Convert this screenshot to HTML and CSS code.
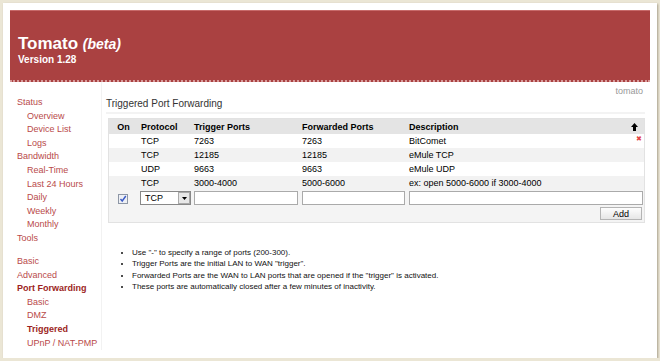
FILE: index.html
```html
<!DOCTYPE html>
<html lang="en">
<head>
    <meta charset="UTF-8">
    <title>[tomato] Triggered Port Forwarding</title>
    <link rel="stylesheet" href="styles.css">
</head>
<body>
    <div class="container">
        <div class="header">
            <div class="title">Tomato <i>(beta)</i></div>
            <div class="version">Version 1.28</div>
        </div>

        <div class="main">
            <!-- Navigation -->
            <ul class="nav">
                <li><a href="#">Status</a></li>
                <li class="sub"><a href="#">Overview</a></li>
                <li class="sub"><a href="#">Device List</a></li>
                <li class="sub"><a href="#">Logs</a></li>
                <li><a href="#">Bandwidth</a></li>
                <li class="sub"><a href="#">Real-Time</a></li>
                <li class="sub"><a href="#">Last 24 Hours</a></li>
                <li class="sub"><a href="#">Daily</a></li>
                <li class="sub"><a href="#">Weekly</a></li>
                <li class="sub"><a href="#">Monthly</a></li>
                <li><a href="#">Tools</a></li>
                <li class="gap"><a href="#">Basic</a></li>
                <li><a href="#">Advanced</a></li>
                <li class="active"><a href="#">Port Forwarding</a></li>
                <li class="sub"><a href="#">Basic</a></li>
                <li class="sub"><a href="#">DMZ</a></li>
                <li class="sub active"><a href="#">Triggered</a></li>
                <li class="sub"><a href="#">UPnP / NAT-PMP</a></li>
            </ul>

            <div class="content">
                <div class="ident">tomato</div>
                <div class="section-title">Triggered Port Forwarding</div>

                <div class="grid-box">
                    <table class="grid">
                        <colgroup>
                            <col class="c-on">
                            <col class="c-proto">
                            <col class="c-trig">
                            <col class="c-fwd">
                            <col>
                        </colgroup>
                        <thead>
                            <tr>
                                <th class="center">On</th>
                                <th>Protocol</th>
                                <th>Trigger Ports</th>
                                <th>Forwarded Ports</th>
                                <th>Description
                                    <svg class="sort" width="7" height="8" viewBox="0 0 7 8"><path d="M3.5 0 L7 4 H5 V8 H2 V4 H0 Z" fill="#000"/></svg>
                                </th>
                            </tr>
                        </thead>
                        <tbody>
                            <tr>
                                <td></td><td>TCP</td><td>7263</td><td>7263</td>
                                <td>BitComet<span class="del">&#10006;</span></td>
                            </tr>
                            <tr class="odd">
                                <td></td><td>TCP</td><td>12185</td><td>12185</td><td>eMule TCP</td>
                            </tr>
                            <tr>
                                <td></td><td>UDP</td><td>9663</td><td>9663</td><td>eMule UDP</td>
                            </tr>
                            <tr class="odd">
                                <td></td><td>TCP</td><td>3000-4000</td><td>5000-6000</td><td>ex: open 5000-6000 if 3000-4000</td>
                            </tr>
                            <tr class="edit">
                                <td class="center"><input type="checkbox" class="check" checked></td>
                                <td>
                                    <div class="select">
                                        <select>
                                            <option>TCP</option>
                                            <option>UDP</option>
                                            <option>Both</option>
                                        </select>
                                        <span class="drop"><svg width="5" height="3" viewBox="0 0 5 3"><path d="M0 0 H5 L2.5 3 Z" fill="#000"/></svg></span>
                                    </div>
                                </td>
                                <td><input type="text" class="field"></td>
                                <td><input type="text" class="field"></td>
                                <td><input type="text" class="field"></td>
                            </tr>
                            <tr class="controls">
                                <td colspan="5"><button class="add-btn">Add</button></td>
                            </tr>
                        </tbody>
                    </table>
                </div>

                <ul class="notes">
                    <li>Use "-" to specify a range of ports (200-300).</li>
                    <li>Trigger Ports are the initial LAN to WAN "trigger".</li>
                    <li>Forwarded Ports are the WAN to LAN ports that are opened if the "trigger" is activated.</li>
                    <li>These ports are automatically closed after a few minutes of inactivity.</li>
                </ul>
            </div>
        </div>
    </div>
</body>
</html>
```

FILE: styles.css
```css
body {
    margin: 0;
    padding: 3px 0 0 3px;
    background-color: #ebe6d5;
    font-family: "Liberation Sans", Arial, sans-serif;
    font-size: 9px;
    color: #000;
}
.container {
    width: 640px;
    height: 341px;
    padding: 7px;
    background-color: #fff;
    box-shadow: 1px 1px 2px #a8a08c;
    overflow: hidden;
}
.header {
    box-sizing: border-box;
    height: 72px;
    padding: 23px 0 0 8px;
    background-color: #aa4141;
    border-top: 1px solid #c76a6a;
    border-bottom: 2px dotted #d89a9a;
    color: #fff;
}
.title {
    font-size: 17px;
    font-weight: bold;
    line-height: 20px;
}
.title i {
    font-size: 14px;
}
.version {
    font-size: 10px;
    font-weight: bold;
    line-height: 12px;
}
.main {
    display: flex;
}
.nav {
    list-style: none;
    margin: 0;
    padding: 14px 0 0 7px;
    width: 84px;
    border-right: 1px solid #f2f2f2;
    font-size: 9px;
    line-height: 13.6px;
}
.nav a {
    color: #b94a4a;
    text-decoration: none;
}
.nav .sub {
    padding-left: 10px;
}
.nav .gap {
    margin-top: 9.5px;
}
.nav .active a {
    color: #9c1f24;
    font-weight: bold;
}
.content {
    flex: 1;
    padding: 4px 5px 0 4px;
}
.ident {
    text-align: right;
    color: #999;
    font-size: 9px;
    line-height: 11px;
    padding-right: 2px;
}
.section-title {
    font-size: 10px;
    line-height: 12px;
    color: #333;
    padding: 1px 0 2px 0;
    border-bottom: 2px solid #f3f3f3;
    margin-bottom: 4px;
}
.grid-box {
    margin-left: 2px;
    border: 1px solid #e2e2e2;
    background-color: #f4f4f4;
}
.grid {
    width: 100%;
    border-collapse: collapse;
    table-layout: fixed;
}
.c-on { width: 29px; }
.c-proto { width: 53px; }
.c-trig { width: 108px; }
.c-fwd { width: 107px; }
.grid th {
    background-color: #e4e4e4;
    font-weight: bold;
    text-align: left;
    height: 15px;
    padding: 0 3px;
    position: relative;
}
.grid td {
    height: 14px;
    padding: 0 3px;
    background-color: #fff;
    white-space: nowrap;
    position: relative;
}
.grid .odd td {
    background-color: #f2f2f2;
}
.grid .center {
    text-align: center;
}
.sort {
    position: absolute;
    right: 6px;
    top: 4px;
}
.del {
    position: absolute;
    right: 2px;
    top: 1px;
    color: #e24545;
    font-size: 7px;
}
.grid .edit td {
    height: 16px;
    background-color: #f4f4f4;
    padding: 0 1px 0 3px;
}
.grid .edit td:first-child {
    padding: 0;
}
.check {
    appearance: none;
    width: 10px;
    height: 10px;
    margin: 2px 0 0 -1px;
    border: 1px solid #8e97a6;
    background: #eef0f5 url("data:image/svg+xml,%3Csvg xmlns='http://www.w3.org/2000/svg' width='8' height='8'%3E%3Cpath d='M1.5 4 L3.2 6 L6.8 1' stroke='%233b5bc6' stroke-width='1.4' fill='none'/%3E%3C/svg%3E") no-repeat center;
    vertical-align: top;
}
.select {
    position: relative;
    width: 51px;
    height: 14px;
    margin-left: -1px;
}
.select select {
    appearance: none;
    width: 100%;
    height: 14px;
    border: 1px solid #888;
    background: #fff;
    font-family: inherit;
    font-size: 9px;
    padding: 0 0 0 4px;
    margin: 0;
    display: block;
}
.drop {
    position: absolute;
    right: 1px;
    top: 1px;
    width: 12px;
    height: 12px;
    box-sizing: border-box;
    border: 1px solid #aaa;
    background: #e8e8e8;
    display: flex;
    align-items: center;
    justify-content: center;
}
.field {
    width: 100%;
    height: 14px;
    box-sizing: border-box;
    border: 1px solid #aaa;
    margin: 0;
    padding: 0 2px;
    font-size: 9px;
    display: block;
}
.grid .controls td {
    height: 15px;
    background-color: #f4f4f4;
    text-align: right;
    padding: 0 2px 1px 0;
}
.add-btn {
    width: 42px;
    height: 13px;
    padding: 0;
    font-family: inherit;
    font-size: 9px;
    border: 1px solid #b4b4b4;
    background: linear-gradient(#fdfdfd, #e6e6e6);
    display: block;
    margin-left: auto;
}
.notes {
    margin: 24px 0 0 0;
    padding: 0 0 0 26px;
    font-size: 8px;
    line-height: 11.3px;
    color: #111;
}
```
